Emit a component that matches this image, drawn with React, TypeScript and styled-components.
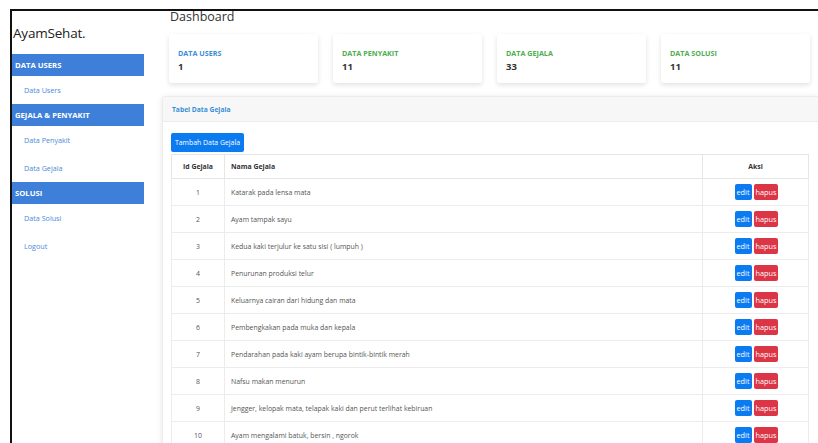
import React from 'react'
import styled, { createGlobalStyle } from 'styled-components'

const GlobalStyle = createGlobalStyle`
  html, body {
    margin: 0;
    padding: 0;
    background: #ffffff;
    overflow: hidden;
  }
  body {
    font-family: 'Open Sans', 'Noto Sans', sans-serif;
    color: #555;
  }
`

const Frame = styled.div`
  margin: 9px 0 0 10px;
  border-top: 2px solid #111;
  border-left: 2px solid #111;
  height: 434px;
  display: flex;
  overflow: hidden;
  box-sizing: border-box;
`

const Sidebar = styled.nav`
  width: 132px;
  flex-shrink: 0;
  background: #fff;
  display: flex;
  flex-direction: column;

  & > * {
    flex-shrink: 0;
  }
`

const Brand = styled.div`
  height: 43px;
  display: flex;
  align-items: center;
  padding: 0 0 0 1px;
  font-size: 13.5px;
  color: #222;
  letter-spacing: -0.2px;
`

const SectionBar = styled.div`
  height: 22px;
  background: #3d7fd9;
  color: #fff;
  font-size: 7.7px;
  font-weight: 700;
  display: flex;
  align-items: center;
  padding-left: 3px;
`

const NavLink = styled.a`
  height: 28px;
  display: flex;
  align-items: center;
  padding-left: 12px;
  font-size: 7.2px;
  color: #4a8bd8;
  text-decoration: none;
`

const Main = styled.main`
  flex: 1;
  padding: 0 0 0 18px;
  display: flex;
  flex-direction: column;
  min-width: 0;

  & > * {
    flex-shrink: 0;
  }
`

const Title = styled.h1`
  margin: 0 0 0 8px;
  height: 23px;
  line-height: 12px;
  font-size: 12.5px;
  font-weight: 400;
  color: #333;
`

const StatRow = styled.div`
  display: flex;
  gap: 15px;
  padding: 0 0 0 7px;
`

const StatCard = styled.div`
  width: 149px;
  height: 49px;
  box-sizing: border-box;
  background: #fff;
  border-radius: 3px;
  box-shadow: 0 2px 5px rgba(0, 0, 0, 0.12);
  padding: 14px 0 0 9px;
`

const StatLabel = styled.div<{ $tone: 'blue' | 'green' }>`
  font-size: 7.2px;
  font-weight: 700;
  color: ${p => (p.$tone === 'blue' ? '#3a8fd6' : '#4cae4f')};
`

const StatValue = styled.div`
  font-size: 9.5px;
  font-weight: 700;
  color: #333;
  margin-top: 2px;
`

const TableCard = styled.section`
  margin-top: 13px;
  background: #fff;
  border-radius: 3px 0 0 0;
  box-shadow: 0 1px 6px rgba(0, 0, 0, 0.1);
  border: 1px solid #ececec;
  border-right: none;
`

const CardHeader = styled.div`
  height: 24px;
  background: #f7f7f7;
  border-bottom: 1px solid #ececec;
  display: flex;
  align-items: center;
  padding-left: 9px;
  font-size: 6.7px;
  font-weight: 700;
  color: #3a8fd6;
`

const CardBody = styled.div`
  padding: 11px 9px 0 8px;
`

const AddButton = styled.button`
  height: 19px;
  padding: 0 4px;
  border: none;
  border-radius: 2px;
  background: #0b7bf2;
  color: #fff;
  font-family: inherit;
  font-size: 6.9px;
  display: block;
`

const Table = styled.table`
  width: 100%;
  border-collapse: collapse;
  margin-top: 2px;
  font-size: 6.9px;
`

const HeadCell = styled.th<{ $align?: 'left' | 'center' }>`
  height: 23px;
  padding: 0 6px;
  border: 1px solid #e6e6e6;
  text-align: ${p => p.$align ?? 'left'};
  font-weight: 700;
  color: #333;
`

const Cell = styled.td<{ $align?: 'left' | 'center' }>`
  height: 26px;
  padding: 0 6px;
  border: 1px solid #ececec;
  text-align: ${p => p.$align ?? 'left'};
  color: #555;
`

const ActionButton = styled.button<{ $variant: 'edit' | 'delete' }>`
  height: 16px;
  padding: 0 2px;
  margin-left: 2px;
  border: none;
  border-radius: 2px;
  background: ${p => (p.$variant === 'edit' ? '#0b7bf2' : '#dc3545')};
  color: #fff;
  font-family: inherit;
  font-size: 7.3px;
  vertical-align: middle;
`

const stats = [
  { label: 'DATA USERS', value: 1, tone: 'blue' as const },
  { label: 'DATA PENYAKIT', value: 11, tone: 'green' as const },
  { label: 'DATA GEJALA', value: 33, tone: 'green' as const },
  { label: 'DATA SOLUSI', value: 11, tone: 'green' as const },
]

const gejala = [
  'Katarak pada lensa mata',
  'Ayam tampak sayu',
  'Kedua kaki terjulur ke satu sisi ( lumpuh )',
  'Penurunan produksi telur',
  'Keluarnya cairan dari hidung dan mata',
  'Pembengkakan pada muka dan kepala',
  'Pendarahan pada kaki ayam berupa bintik-bintik merah',
  'Nafsu makan menurun',
  'Jengger, kelopak mata, telapak kaki dan perut terlihat kebiruan',
  'Ayam mengalami batuk, bersin , ngorok',
]

export default function App() {
  return (
    <>
      <GlobalStyle />
      <Frame>
        <Sidebar>
          <Brand>AyamSehat.</Brand>
          <SectionBar>DATA USERS</SectionBar>
          <NavLink href="#">Data Users</NavLink>
          <SectionBar>GEJALA &amp; PENYAKIT</SectionBar>
          <NavLink href="#">Data Penyakit</NavLink>
          <NavLink href="#">Data Gejala</NavLink>
          <SectionBar>SOLUSI</SectionBar>
          <NavLink href="#">Data Solusi</NavLink>
          <NavLink href="#">Logout</NavLink>
        </Sidebar>

        <Main>
          <Title>Dashboard</Title>
          <StatRow>
            {stats.map(s => (
              <StatCard key={s.label}>
                <StatLabel $tone={s.tone}>{s.label}</StatLabel>
                <StatValue>{s.value}</StatValue>
              </StatCard>
            ))}
          </StatRow>

          <TableCard>
            <CardHeader>Tabel Data Gejala</CardHeader>
            <CardBody>
              <AddButton>Tambah Data Gejala</AddButton>
              <Table>
                <thead>
                  <tr>
                    <HeadCell $align="center" style={{ width: 40 }}>Id Gejala</HeadCell>
                    <HeadCell>Nama Gejala</HeadCell>
                    <HeadCell $align="center" style={{ width: 93 }}>Aksi</HeadCell>
                  </tr>
                </thead>
                <tbody>
                  {gejala.map((nama, i) => (
                    <tr key={i}>
                      <Cell $align="center">{i + 1}</Cell>
                      <Cell>{nama}</Cell>
                      <Cell $align="center">
                        <ActionButton $variant="edit">edit</ActionButton>
                        <ActionButton $variant="delete">hapus</ActionButton>
                      </Cell>
                    </tr>
                  ))}
                </tbody>
              </Table>
            </CardBody>
          </TableCard>
        </Main>
      </Frame>
    </>
  )
}
